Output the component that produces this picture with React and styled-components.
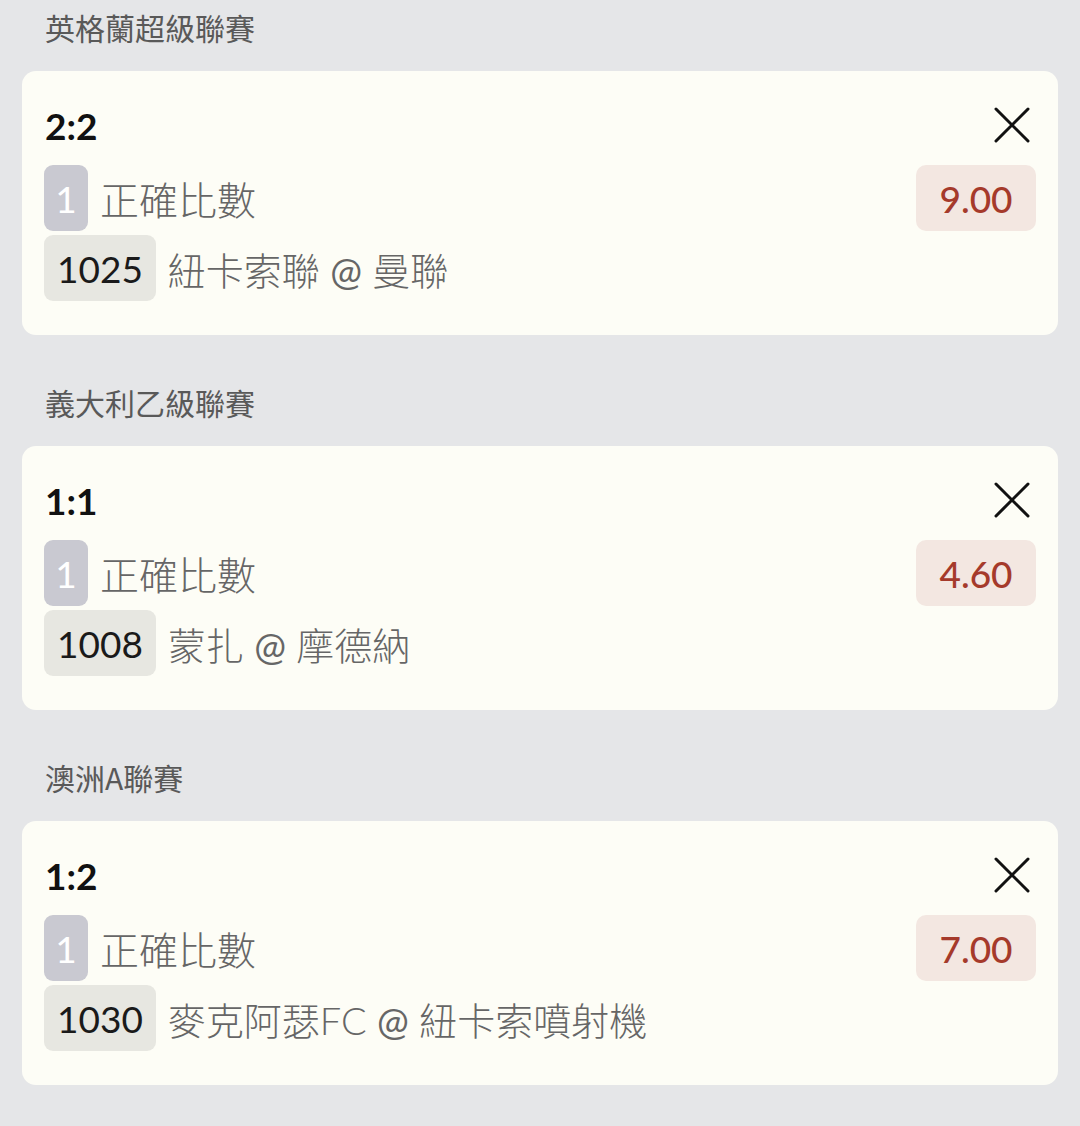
import React from 'react';
import styled, { createGlobalStyle } from 'styled-components';

const GlobalStyle = createGlobalStyle`
  html, body {
    margin: 0;
    padding: 0;
    background: #e5e6e8;
  }
  body {
    font-family: Lato, "Noto Sans CJK TC", sans-serif;
  }
`;

const List = styled.div`
  display: flex;
  flex-direction: column;
  gap: 45px;
  padding: 5px 22px 40px 22px;
`;

const Section = styled.section`
  display: flex;
  flex-direction: column;
  gap: 22px;
`;

const LeagueTitle = styled.div`
  height: 44px;
  line-height: 44px;
  padding-left: 23px;
  font-size: 30px;
  color: #595959;
  font-family: "Noto Sans CJK TC", sans-serif;
`;

const Card = styled.div`
  background: #fdfdf6;
  border-radius: 14px;
  padding: 30px 22px 34px 22px;
  display: flex;
  flex-direction: column;
`;

const TopRow = styled.div`
  display: flex;
  align-items: center;
  justify-content: space-between;
  height: 48px;
  margin-bottom: 16px;
`;

const Score = styled.div`
  font-family: Lato, sans-serif;
  font-weight: 700;
  font-size: 37px;
  color: #111;
  padding-left: 1px;
`;

const Close = styled.button`
  border: 0;
  background: none;
  padding: 0;
  margin-right: 6px;
  width: 36px;
  height: 36px;
  display: flex;
  align-items: center;
  justify-content: center;
  cursor: pointer;
`;

const Row = styled.div`
  display: flex;
  align-items: center;
  gap: 12px;
  margin-bottom: ${p => p.$gap || 0}px;
`;

const Tag = styled.div`
  height: 66px;
  min-width: ${p => p.$min || 0}px;
  box-sizing: border-box;
  padding: 0 ${p => p.$pad}px;
  border-radius: 9px;
  background: ${p => p.$bg};
  color: ${p => p.$color};
  display: flex;
  align-items: center;
  justify-content: center;
  font-family: Lato, sans-serif;
  font-size: 37px;
`;

const Label = styled.div`
  font-family: Lato, "Noto Sans CJK TC", sans-serif;
  font-size: ${p => p.$size}px;
  font-weight: 300;
  color: #666;
  flex: 1;
`;

const At = styled.span`
  font-weight: 400;
`;

const Odds = styled.div`
  width: 120px;
  height: 66px;
  border-radius: 10px;
  background: #f3e7e1;
  color: #a53a2b;
  font-family: Lato, sans-serif;
  font-size: 37px;
  font-weight: 500;
  display: flex;
  align-items: center;
  justify-content: center;
`;

const bets = [
  { league: '英格蘭超級聯賽', score: '2:2', market: '正確比數', odds: '9.00', no: '1025', home: '紐卡索聯', away: '曼聯' },
  { league: '義大利乙級聯賽', score: '1:1', market: '正確比數', odds: '4.60', no: '1008', home: '蒙扎', away: '摩德納' },
  { league: '澳洲A聯賽', score: '1:2', market: '正確比數', odds: '7.00', no: '1030', home: '麥克阿瑟FC', away: '紐卡索噴射機' },
];

function CloseIcon() {
  return (
    <svg width="36" height="36" viewBox="0 0 36 36">
      <path d="M2 2 L34 34 M34 2 L2 34" stroke="#111" strokeWidth="3" strokeLinecap="round" />
    </svg>
  );
}

function BetCard({ bet }) {
  return (
    <Section>
      <LeagueTitle>{bet.league}</LeagueTitle>
      <Card>
        <TopRow>
          <Score>{bet.score}</Score>
          <Close><CloseIcon /></Close>
        </TopRow>
        <Row $gap={4}>
          <Tag $bg="#c9c9d1" $color="#fff" $pad={0} $min={44}>1</Tag>
          <Label $size={39}>{bet.market}</Label>
          <Odds>{bet.odds}</Odds>
        </Row>
        <Row>
          <Tag $bg="#e7e7e1" $color="#1a1a1a" $pad={13}>{bet.no}</Tag>
          <Label $size={38}>{bet.home} <At>@</At> {bet.away}</Label>
        </Row>
      </Card>
    </Section>
  );
}

export default function App() {
  return (
    <>
      <GlobalStyle />
      <List>
        {bets.map(b => <BetCard key={b.no} bet={b} />)}
      </List>
    </>
  );
}
